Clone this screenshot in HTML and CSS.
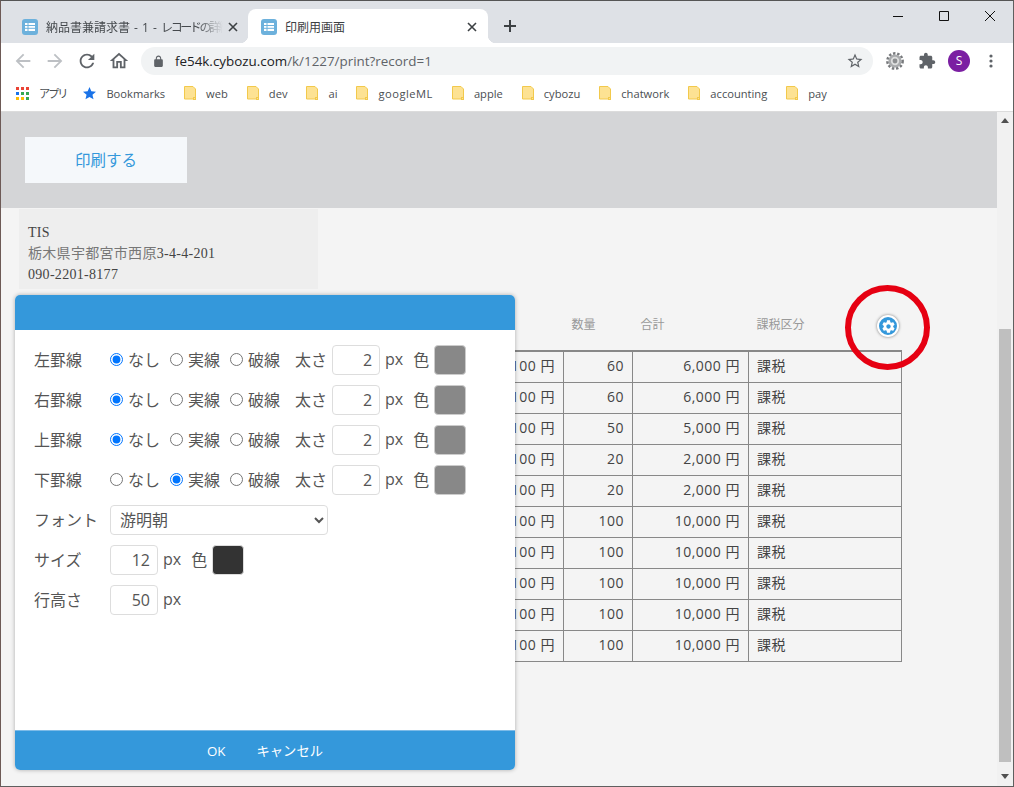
FILE: index.html
```html
<!DOCTYPE html>
<html lang="ja">
<head>
	<meta charset="utf-8">
	<title>印刷用画面</title>
	<link rel="stylesheet" href="styles.css">
</head>
<body>
	<svg class="defs" width="0" height="0">
		<symbol id="folder" viewBox="0 0 12 14">
			<path d="M.5.5h8.5l2.5 2.5v10h-11z" fill="#fde293" stroke="#f2c94c"/>
			<path d="M9 11h3v3H9z" fill="#f2c94c"/>
			<path d="M10 12h1v1h-1z" fill="#fde293"/>
		</symbol>
		<symbol id="sheet" viewBox="0 0 16 16">
			<rect width="16" height="16" rx="3" fill="#6db1dc"/>
			<path d="M3 4h10v8H3z" fill="#fff"/>
			<path d="M3 6.5h10M3 9.3h10M6 4v8" stroke="#6db1dc" stroke-width="1"/>
		</symbol>
		<symbol id="close" viewBox="0 0 10 10">
			<path d="M1 1l8 8M9 1l-8 8" stroke="#3c4043" stroke-width="1.6" fill="none"/>
		</symbol>
		<symbol id="cog" viewBox="0 0 24 24">
			<path d="M19.43 12.98c.04-.32.07-.64.07-.98s-.03-.66-.07-.98l2.11-1.65c.19-.15.24-.42.12-.64l-2-3.46c-.12-.22-.39-.3-.61-.22l-2.49 1c-.52-.4-1.08-.73-1.69-.98l-.38-2.65C14.46 2.18 14.25 2 14 2h-4c-.25 0-.46.18-.49.42l-.38 2.65c-.61.25-1.17.59-1.69.98l-2.49-1c-.23-.09-.49 0-.61.22l-2 3.46c-.13.22-.07.49.12.64l2.11 1.65c-.04.32-.07.65-.07.98s.03.66.07.98l-2.11 1.65c-.19.15-.24.42-.12.64l2 3.46c.12.22.39.3.61.22l2.49-1c.52.4 1.08.73 1.69.98l.38 2.65c.03.24.24.42.49.42h4c.25 0 .46-.18.49-.42l.38-2.65c.61-.25 1.17-.59 1.69-.98l2.49 1c.23.09.49 0 .61-.22l2-3.46c.12-.22.07-.49-.12-.64l-2.11-1.65zM12 15.5c-1.93 0-3.5-1.57-3.5-3.5s1.57-3.5 3.5-3.5 3.5 1.57 3.5 3.5-1.57 3.5-3.5 3.5z"/>
		</symbol>
		<symbol id="arrow" viewBox="0 0 24 24">
			<path d="M20 11H7.83l5.59-5.59L12 4l-8 8 8 8 1.41-1.41L7.83 13H20v-2z"/>
		</symbol>
	</svg>

	<div class="window">
		<div class="tabbar">
			<div class="tab">
				<svg class="tab-icon"><use href="#sheet"/></svg>
				<span class="tab-title fade">納品書兼請求書 - 1 - <span class="narrow">レコードの詳細</span></span>
				<svg class="tab-close"><use href="#close"/></svg>
			</div>
			<div class="tab active">
				<svg class="tab-icon"><use href="#sheet"/></svg>
				<span class="tab-title">印刷用画面</span>
				<svg class="tab-close"><use href="#close"/></svg>
			</div>
			<div class="newtab">
				<svg width="12" height="12" viewBox="0 0 12 12"><path d="M6 0v12M0 6h12" stroke="#3c4043" stroke-width="2"/></svg>
			</div>
			<div class="winctl">
				<div class="winbtn"><svg width="10" height="10" viewBox="0 0 10 10"><path d="M0 5.5h10" stroke="#111"/></svg></div>
				<div class="winbtn"><svg width="10" height="10" viewBox="0 0 10 10"><path d="M.5.5h9v9h-9z" fill="none" stroke="#111"/></svg></div>
				<div class="winbtn"><svg width="10" height="10" viewBox="0 0 10 10"><path d="M0 0l10 10M10 0L0 10" stroke="#111"/></svg></div>
			</div>
		</div>

		<div class="toolbar">
			<svg class="tool light" viewBox="0 0 24 24"><use href="#arrow"/></svg>
			<svg class="tool light flip" viewBox="0 0 24 24"><use href="#arrow"/></svg>
			<svg class="tool" viewBox="0 0 24 24"><path d="M17.65 6.35C16.2 4.9 14.21 4 12 4c-4.42 0-7.99 3.58-7.99 8s3.57 8 7.99 8c3.73 0 6.84-2.55 7.73-6h-2.08c-.82 2.33-3.04 4-5.65 4-3.31 0-6-2.69-6-6s2.69-6 6-6c1.66 0 3.14.69 4.22 1.78L13 11h7V4l-2.35 2.35z"/></svg>
			<svg class="tool" viewBox="0 0 24 24"><path d="M12 5.69l5 4.5V18h-2v-6H9v6H7v-7.81l5-4.5M12 3L2 12h3v8h6v-6h2v6h6v-8h3L12 3z"/></svg>
			<div class="omnibox">
				<svg class="lock" viewBox="0 0 24 24"><path d="M18 8h-1V6c0-2.76-2.24-5-5-5S7 3.24 7 6v2H6c-1.1 0-2 .9-2 2v10c0 1.1.9 2 2 2h12c1.1 0 2-.9 2-2V10c0-1.1-.9-2-2-2zM9 6c0-1.66 1.34-3 3-3s3 1.34 3 3v2H9V6z"/></svg>
				<span class="url"><b>fe54k.cybozu.com</b>/k/1227/print?record=1</span>
				<svg class="tool star" viewBox="0 0 24 24"><path d="M22 9.24l-7.19-.62L12 2 9.19 8.63 2 9.24l5.46 4.73L5.82 21 12 17.27 18.18 21l-1.63-7.03L22 9.24zM12 15.4l-3.76 2.27 1-4.28-3.32-2.88 4.38-.38L12 6.1l1.71 4.04 4.38.38-3.32 2.88 1 4.28L12 15.4z"/></svg>
			</div>
			<svg class="silver-gear" width="18" height="18" viewBox="0 0 18 18">
				<circle cx="9" cy="9" r="7.6" fill="none" stroke="#77797c" stroke-width="2.6" stroke-dasharray="2.4 1.8"/>
				<circle cx="9" cy="9" r="6.6" fill="#a9abad"/>
				<circle cx="9" cy="9" r="4.2" fill="#dcdddd"/>
				<circle cx="9" cy="9" r="2.4" fill="#8d8f91"/>
			</svg>
			<svg class="tool ext" viewBox="0 0 24 24"><path d="M20.5 11H19V7c0-1.1-.9-2-2-2h-4V3.5C13 2.12 11.88 1 10.5 1S8 2.12 8 3.5V5H4c-1.1 0-1.99.9-1.99 2v3.8H3.5c1.49 0 2.7 1.21 2.7 2.7s-1.21 2.7-2.7 2.7H2V20c0 1.1.9 2 2 2h3.8v-1.5c0-1.49 1.21-2.7 2.7-2.7 1.49 0 2.7 1.21 2.7 2.7V22H17c1.1 0 2-.9 2-2v-4h1.5c1.38 0 2.5-1.12 2.5-2.5S21.88 11 20.5 11z"/></svg>
			<div class="avatar">S</div>
			<svg class="kebab" width="4" height="14" viewBox="0 0 4 14"><circle cx="2" cy="2" r="1.6"/><circle cx="2" cy="7" r="1.6"/><circle cx="2" cy="12" r="1.6"/></svg>
		</div>

		<div class="bookmarks">
			<div class="bm">
				<svg class="apps" width="13" height="13" viewBox="0 0 13 13">
					<path fill="#ea4335" d="M0 0h3v3H0zM5 0h3v3H5zM10 0h3v3h-3z"/>
					<path fill="#1a73e8" d="M0 5h3v3H0z"/>
					<path fill="#34a853" d="M5 5h3v3H5zM10 5h3v3h-3z"/>
					<path fill="#fbbc04" d="M0 10h3v3H0zM5 10h3v3H5z"/>
					<path fill="#34a853" d="M10 10h3v3h-3z"/>
				</svg>
				<span class="bm-jp">アプリ</span>
			</div>
			<div class="bm">
				<svg width="13" height="13" viewBox="2 2 20 20" fill="#1a73e8"><path d="M12 17.27L18.18 21l-1.64-7.03L22 9.24l-7.19-.61L12 2 9.19 8.63 2 9.24l5.46 4.73L5.82 21z"/></svg>
				<span>Bookmarks</span>
			</div>
			<div class="bm"><svg class="folder"><use href="#folder"/></svg><span>web</span></div>
			<div class="bm"><svg class="folder"><use href="#folder"/></svg><span>dev</span></div>
			<div class="bm"><svg class="folder"><use href="#folder"/></svg><span>ai</span></div>
			<div class="bm"><svg class="folder"><use href="#folder"/></svg><span class="bm-wide">googleML</span></div>
			<div class="bm"><svg class="folder"><use href="#folder"/></svg><span>apple</span></div>
			<div class="bm"><svg class="folder"><use href="#folder"/></svg><span>cybozu</span></div>
			<div class="bm"><svg class="folder"><use href="#folder"/></svg><span>chatwork</span></div>
			<div class="bm"><svg class="folder"><use href="#folder"/></svg><span>accounting</span></div>
			<div class="bm"><svg class="folder"><use href="#folder"/></svg><span>pay</span></div>
		</div>

		<div class="viewport">
			<main class="page">
				<div class="print-bar">
					<button class="print-btn">印刷する</button>
				</div>
				<div class="address">
					<div>TIS</div>
					<div><span class="kanji">栃木県宇都宮市西原</span>3-4-4-201</div>
					<div>090-2201-8177</div>
				</div>
				<div class="items">
					<table class="item-table">
						<thead>
							<tr><th class="c-price">単価</th><th class="c-qty">数量</th><th class="c-sum">合計</th><th class="c-tax">課税区分</th></tr>
						</thead>
						<tbody>
							<tr><td class="num">100 円</td><td class="num">60</td><td class="num">6,000 円</td><td>課税</td></tr>
							<tr><td class="num">100 円</td><td class="num">60</td><td class="num">6,000 円</td><td>課税</td></tr>
							<tr><td class="num">100 円</td><td class="num">50</td><td class="num">5,000 円</td><td>課税</td></tr>
							<tr><td class="num">100 円</td><td class="num">20</td><td class="num">2,000 円</td><td>課税</td></tr>
							<tr><td class="num">100 円</td><td class="num">20</td><td class="num">2,000 円</td><td>課税</td></tr>
							<tr><td class="num">100 円</td><td class="num">100</td><td class="num">10,000 円</td><td>課税</td></tr>
							<tr><td class="num">100 円</td><td class="num">100</td><td class="num">10,000 円</td><td>課税</td></tr>
							<tr><td class="num">100 円</td><td class="num">100</td><td class="num">10,000 円</td><td>課税</td></tr>
							<tr><td class="num">100 円</td><td class="num">100</td><td class="num">10,000 円</td><td>課税</td></tr>
							<tr><td class="num">100 円</td><td class="num">100</td><td class="num">10,000 円</td><td>課税</td></tr>
						</tbody>
					</table>
				</div>

				<!-- gear on the column header, with the red mark drawn round it -->
				<div class="gear-btn"><svg width="15" height="15" fill="#fff"><use href="#cog"/></svg></div>
				<div class="red-mark"></div>

				<div class="modal">
					<div class="modal-head"></div>
					<div class="modal-body">
						<div class="row">
							<span class="row-label">左罫線</span>
							<label class="opt"><input type="radio" name="left" checked>なし</label>
							<label class="opt"><input type="radio" name="left">実線</label>
							<label class="opt"><input type="radio" name="left">破線</label>
							<span class="thick">太さ</span>
							<input class="num-input" type="text" value="2">
							<span class="unit">px</span>
							<span class="color-label">色</span>
							<span class="swatch"></span>
						</div>
						<div class="row">
							<span class="row-label">右罫線</span>
							<label class="opt"><input type="radio" name="right" checked>なし</label>
							<label class="opt"><input type="radio" name="right">実線</label>
							<label class="opt"><input type="radio" name="right">破線</label>
							<span class="thick">太さ</span>
							<input class="num-input" type="text" value="2">
							<span class="unit">px</span>
							<span class="color-label">色</span>
							<span class="swatch"></span>
						</div>
						<div class="row">
							<span class="row-label">上罫線</span>
							<label class="opt"><input type="radio" name="top" checked>なし</label>
							<label class="opt"><input type="radio" name="top">実線</label>
							<label class="opt"><input type="radio" name="top">破線</label>
							<span class="thick">太さ</span>
							<input class="num-input" type="text" value="2">
							<span class="unit">px</span>
							<span class="color-label">色</span>
							<span class="swatch"></span>
						</div>
						<div class="row">
							<span class="row-label">下罫線</span>
							<label class="opt"><input type="radio" name="bottom">なし</label>
							<label class="opt"><input type="radio" name="bottom" checked>実線</label>
							<label class="opt"><input type="radio" name="bottom">破線</label>
							<span class="thick">太さ</span>
							<input class="num-input" type="text" value="2">
							<span class="unit">px</span>
							<span class="color-label">色</span>
							<span class="swatch"></span>
						</div>
						<div class="row">
							<span class="row-label">フォント</span>
							<select class="font-select"><option>游明朝</option></select>
						</div>
						<div class="row">
							<span class="row-label">サイズ</span>
							<input class="num-input" type="text" value="12">
							<span class="unit">px</span>
							<span class="color-label">色</span>
							<span class="swatch dark"></span>
						</div>
						<div class="row">
							<span class="row-label">行高さ</span>
							<input class="num-input" type="text" value="50">
							<span class="unit">px</span>
						</div>
					</div>
					<div class="modal-foot">
						<button class="foot-btn">OK</button>
						<button class="foot-btn">キャンセル</button>
					</div>
				</div>
			</main>
			<div class="scrollbar">
				<svg class="sb-arrow" width="8" height="5" viewBox="0 0 8 5"><path d="M4 0l4 5H0z"/></svg>
				<div class="sb-thumb"></div>
				<svg class="sb-arrow" width="8" height="5" viewBox="0 0 8 5"><path d="M4 5l4-5H0z"/></svg>
			</div>
		</div>
	</div>
</body>
</html>
```

FILE: styles.css
```css
html, body {
	margin: 0;
	height: 100%;
	overflow: hidden;
}
body {
	font-family: "Open Sans", "Noto Sans CJK JP", sans-serif;
	color: #555;
}
.defs {
	position: absolute;
}
.window {
	box-sizing: border-box;
	width: 1014px;
	height: 787px;
	display: flex;
	flex-direction: column;
	border: 1px solid #5f5f5f;
	border-left-color: #6d5a56;
	border-top-color: #555;
}

/* tabs */
.tabbar {
	height: 42px;
	flex: none;
	display: flex;
	align-items: flex-end;
	padding-left: 7px;
	background-color: #dee1e6;
}
.tab {
	position: relative;
	box-sizing: border-box;
	width: 240px;
	height: 34px;
	display: flex;
	align-items: center;
	padding: 2px 10px 0 14px;
	border-radius: 8px 8px 0 0;
	font-size: 12px;
	color: #45494d;
}
.tab.active {
	background-color: #fff;
	padding: 2px 11px 0 13px;
	color: #3c4043;
}
.tab.active::before,
.tab.active::after {
	content: "";
	position: absolute;
	bottom: 0;
	width: 8px;
	height: 8px;
}
.tab.active::before {
	left: -8px;
	background: radial-gradient(circle at 0 0, transparent 8px, #fff 8.5px);
}
.tab.active::after {
	right: -8px;
	background: radial-gradient(circle at 100% 0, transparent 8px, #fff 8.5px);
}
.tab-icon {
	width: 16px;
	height: 16px;
	flex: none;
	margin-right: 8px;
}
.tab-title {
	flex: 1;
	white-space: nowrap;
	overflow: hidden;
}
.tab-title.fade {
	word-spacing: 1px;
	-webkit-mask-image: linear-gradient(to right, #000 85%, transparent 100%);
	mask-image: linear-gradient(to right, #000 85%, transparent 100%);
}
.narrow {
	letter-spacing: -2.4px;
}
.tab-close {
	width: 10px;
	height: 10px;
	flex: none;
	margin-left: 5px;
}
.newtab {
	width: 12px;
	height: 34px;
	display: flex;
	align-items: center;
	margin-left: 16px;
}
.winctl {
	display: flex;
	margin-left: auto;
	align-self: flex-start;
}
.winbtn {
	width: 46px;
	height: 29px;
	display: flex;
	align-items: center;
	justify-content: center;
}

/* toolbar */
.toolbar {
	height: 36px;
	flex: none;
	display: flex;
	align-items: center;
	padding-left: 11px;
	background-color: #fff;
}
.tool {
	width: 22px;
	height: 22px;
	flex: none;
	margin-right: 10px;
	fill: #5f6368;
}
.tool.light {
	fill: #bdc0c4;
}
.tool.flip {
	transform: scaleX(-1);
}
.omnibox {
	width: 732px;
	height: 28px;
	flex: none;
	display: flex;
	align-items: center;
	margin: 0 13px 0 1px;
	padding-left: 11px;
	box-sizing: border-box;
	border-radius: 14px;
	background-color: #f1f3f4;
}
.lock {
	width: 13px;
	height: 13px;
	flex: none;
	fill: #5f6368;
}
.url {
	flex: 1;
	margin-left: 10px;
	font-size: 13.4px;
	color: #5f6368;
	white-space: nowrap;
}
.url b {
	font-weight: 400;
	color: #202124;
}
.star {
	width: 18px;
	height: 18px;
	margin-right: 9px;
}
.silver-gear {
	flex: none;
	margin-right: 14px;
}
.ext {
	width: 18px;
	height: 18px;
	margin-right: 12px;
}
.avatar {
	width: 22px;
	height: 22px;
	flex: none;
	border-radius: 50%;
	background-color: #7b1fa2;
	color: #fff;
	font-size: 12px;
	line-height: 22px;
	text-align: center;
}
.kebab {
	flex: none;
	margin-left: 19px;
	fill: #5f6368;
}

/* bookmarks */
.bookmarks {
	height: 28px;
	padding: 0 0 4px 15px;
	flex: none;
	display: flex;
	align-items: center;
	gap: 19px;
	background-color: #fff;
	border-bottom: 1px solid #dcdcdc;
	font-size: 11.15px;
	color: #4a4e52;
}
.bm {
	display: flex;
	align-items: center;
	gap: 10px;
	white-space: nowrap;
}
.bm-jp {
	letter-spacing: -2px;
	margin-right: -2px;
}
.bm-wide {
	letter-spacing: .5px;
}
.folder {
	width: 12px;
	height: 14px;
}

/* page */
.viewport {
	flex: 1;
	min-height: 0;
	display: flex;
}
.page {
	position: relative;
	flex: 1;
	overflow: hidden;
	background-color: #f4f4f4;
}
.scrollbar {
	width: 16px;
	flex: none;
	display: flex;
	flex-direction: column;
	align-items: center;
	padding-top: 6px;
	box-sizing: border-box;
	background-color: #f1f1f1;
}
.sb-arrow {
	flex: none;
	fill: #505050;
}
.sb-thumb {
	width: 12px;
	height: 433px;
	margin: 206px 0 12px;
	background-color: #bfbfbf;
}
.print-bar {
	height: 96px;
	box-sizing: border-box;
	padding: 25px 0 0 24px;
	background-color: #d4d5d7;
}
.print-btn {
	width: 162px;
	height: 46px;
	border: none;
	padding: 0 0 2px;
	background-color: #f5f8fb;
	color: #3498db;
	font-family: inherit;
	font-size: 15.5px;
}
.address {
	box-sizing: border-box;
	width: 299px;
	height: 80px;
	margin: 1px 0 0 18px;
	padding: 13px 9px 0;
	background-color: #eee;
	font-family: "Liberation Serif", "Noto Sans CJK JP", serif;
	font-size: 14px;
	line-height: 21px;
	letter-spacing: .3px;
	color: #444;
}
.kanji {
	color: #777;
}
.items {
	margin: 12px 0 0 399px;
}
.item-table {
	table-layout: fixed;
	width: 501px;
	border-collapse: collapse;
	font-size: 14px;
	letter-spacing: .5px;
	color: #444;
}
.item-table th {
	box-sizing: border-box;
	height: 50px;
	padding: 0 8px 3px;
	font-family: "Liberation Serif", "Noto Sans CJK JP", serif;
	font-size: 12px;
	font-weight: 400;
	letter-spacing: 0;
	text-align: left;
	color: #999;
	border-bottom: 2px solid #888;
}
.c-price { width: 163px; }
.c-qty { width: 69px; }
.c-sum { width: 116px; }
.c-tax { width: 153px; }
.item-table td {
	height: 31px;
	padding: 0 8px 3px;
	box-sizing: border-box;
	border: 1px solid #888;
}
.item-table td.num {
	text-align: right;
}
.gear-btn {
	position: absolute;
	left: 876px;
	top: 203px;
	box-sizing: border-box;
	width: 22px;
	height: 22px;
	display: flex;
	align-items: center;
	justify-content: center;
	border: 2px solid #fff;
	border-radius: 50%;
	background-color: #3498db;
	box-shadow: 0 0 3px rgba(0, 0, 0, .5);
}
.red-mark {
	position: absolute;
	left: 844px;
	top: 173px;
	box-sizing: border-box;
	width: 85px;
	height: 85px;
	border: 6px solid #e60012;
	border-radius: 50%;
}

/* modal */
.modal {
	position: absolute;
	left: 14px;
	top: 183px;
	width: 500px;
	height: 475px;
	display: flex;
	flex-direction: column;
	overflow: hidden;
	border-radius: 5px;
	background-color: #fff;
	box-shadow: 0 0 4px rgba(0, 0, 0, .3);
}
.modal-head {
	height: 35px;
	flex: none;
	background-color: #3498db;
}
.modal-body {
	flex: 1;
	padding: 10px 0 0 19px;
	font-size: 16px;
	color: #555;
}
.row {
	height: 40px;
	display: flex;
	align-items: center;
}
.row-label {
	width: 76px;
	flex: none;
	margin-bottom: 2px;
}
.opt {
	display: flex;
	align-items: center;
	gap: 5px;
	margin: 0 10px 2px 0;
}
.opt input {
	margin: 0;
}
.thick {
	margin: 0 5px 2px;
}
.num-input {
	box-sizing: border-box;
	width: 48px;
	height: 30px;
	padding: 0 7px;
	border: 1px solid #ddd;
	border-radius: 4px;
	font-family: inherit;
	font-size: 16px;
	color: #555;
	text-align: right;
}
.unit {
	margin: 0 0 2px 5px;
}
.color-label {
	margin: 0 5px 2px 10px;
}
.swatch {
	box-sizing: border-box;
	width: 32px;
	height: 30px;
	border: 1px solid #ccc;
	border-radius: 4px;
	background-color: #888;
}
.swatch.dark {
	background-color: #333;
	border-color: #ddd;
}
.font-select {
	box-sizing: border-box;
	width: 218px;
	height: 30px;
	padding: 0 5px;
	border: 1px solid #ddd;
	border-radius: 4px;
	background-color: #fff;
	font-family: inherit;
	font-size: 16px;
	color: #555;
}
.modal-foot {
	height: 40px;
	flex: none;
	display: flex;
	align-items: center;
	justify-content: center;
	gap: 31px;
	box-sizing: border-box;
	border-top: 1px solid #7dbbe8;
	background-color: #3498db;
}
.foot-btn {
	border: none;
	padding: 0;
	background: none;
	color: #fff;
	font-family: inherit;
	font-size: 13.3px;
}
```
